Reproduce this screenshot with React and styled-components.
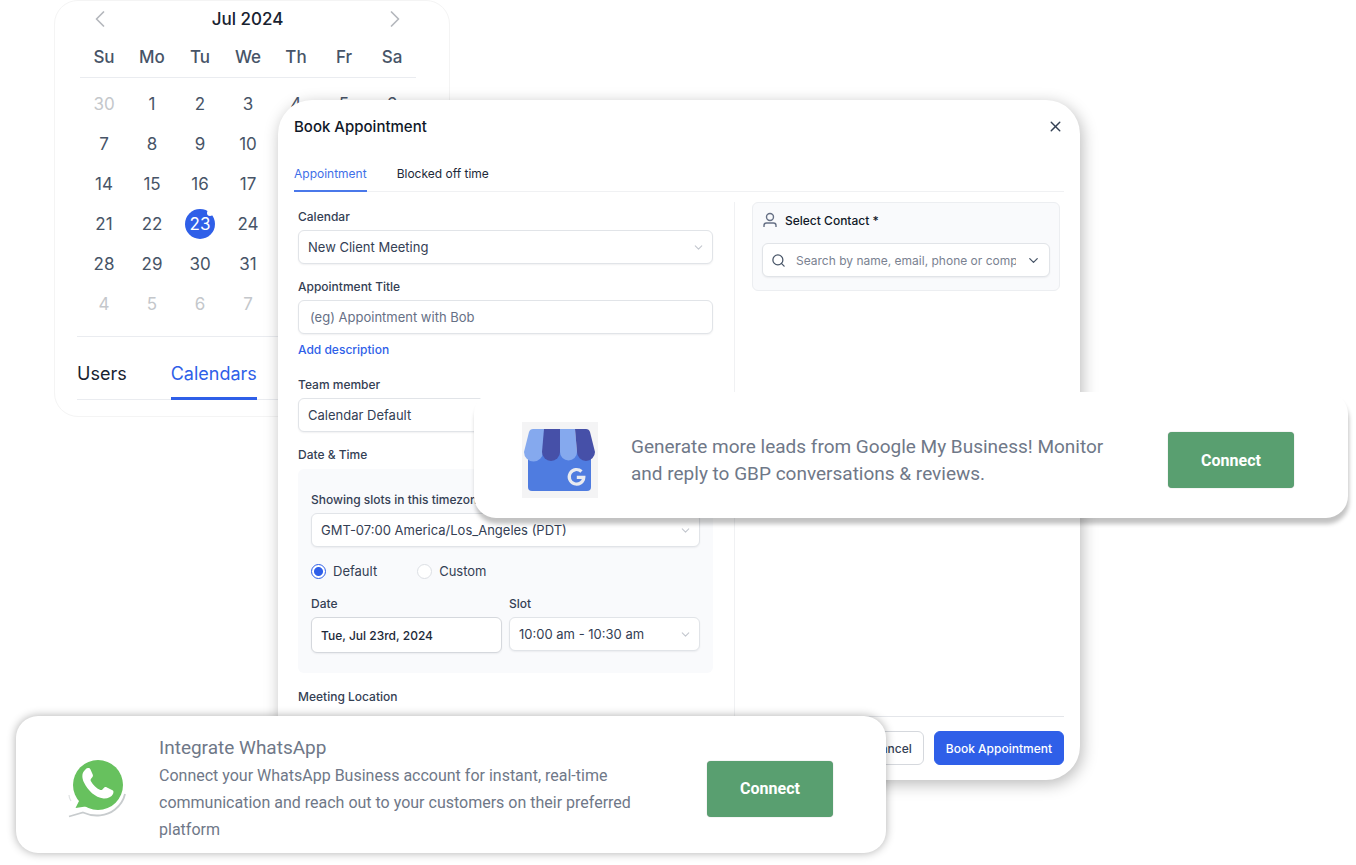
import React, { useState } from 'react';
import styled, { createGlobalStyle, css } from 'styled-components';
import { ChevronDown, ChevronLeft, ChevronRight, Search, X } from 'lucide-react';

const GlobalStyle = createGlobalStyle`
  * {
    box-sizing: border-box;
  }
  body {
    margin: 0;
    background: #fff;
    font-family: Inter, 'Liberation Sans', sans-serif;
    color: #344054;
  }
  button, input, select {
    font-family: inherit;
    color: inherit;
    margin: 0;
  }
`;

const Stage = styled.main`
  position: relative;
  min-width: 1100px;
  min-height: 100vh;
  overflow: hidden;
`;

/* ---------- calendar ---------- */

const CalendarCard = styled.section`
  position: absolute;
  top: 0;
  left: 54px;
  width: 396px;
  padding: 8px 0 16px 22px;
  border: 1px solid #f4f4f4;
  border-radius: 24px;
`;
const MonthBar = styled.header`
  display: flex;
  justify-content: space-between;
  align-items: center;
  width: 339px;
  height: 20px;
  padding: 0 7px 0 9px;
`;
const MonthTitle = styled.h2`
  margin: 0;
  font-size: 17px;
  font-weight: 500;
  color: #182230;
`;
const IconButton = styled.button`
  display: flex;
  padding: 0;
  border: 0;
  background: none;
  color: ${({ $color }) => $color};
  cursor: pointer;
`;
const MonthTable = styled.table`
  width: 336px;
  margin-left: 3px;
  table-layout: fixed;
  border-collapse: collapse;
  text-align: center;
  font-size: 17px;

  th {
    height: 48px;
    padding: 8px 0 0;
    font-weight: 500;
    color: #475467;
    border-bottom: 1px solid #eaecf0;
  }
  td {
    height: 40px;
    padding: 0;
  }
  tbody tr:first-child td {
    height: 47px;
    padding-top: 6px;
  }
`;
const Day = styled.span`
  display: inline-block;
  position: relative;
  width: 30px;
  line-height: 30px;
  border-radius: 50%;
  color: ${({ $muted }) => ($muted ? '#c4c7cb' : '#475467')};

  ${({ $selected }) =>
    $selected &&
    css`
      background: #2f5fe8;
      color: #fff;

      &::after {
        content: '';
        position: absolute;
        top: 1px;
        right: 2px;
        width: 6px;
        height: 6px;
        border-radius: 50%;
        background: #fff;
      }
    `}
`;
const SideTabs = styled.nav`
  display: flex;
  gap: 44px;
  margin-top: 12px;
  padding-top: 24px;
  border-top: 1px solid #eaecf0;
  box-shadow: inset 0 -1px #eaecf0;
`;
const SideTab = styled.a`
  padding-bottom: 10px;
  border-bottom: 3px solid ${({ $active }) => ($active ? '#2f5fe8' : 'transparent')};
  font-size: 18px;
  line-height: 26px;
  color: ${({ $active }) => ($active ? '#2f5fe8' : '#182230')};
  text-decoration: none;
`;

/* ---------- booking dialog ---------- */

const Dialog = styled.section`
  position: absolute;
  top: 100px;
  left: 278px;
  right: 276px;
  padding: 16px 16px 15px;
  border-radius: 34px;
  background: #fff;
  box-shadow: 2px 4px 16px rgba(0, 0, 0, 0.28);
`;
const DialogHeader = styled.header`
  display: flex;
  justify-content: space-between;
  align-items: center;
  height: 20px;
`;
const DialogTitle = styled.h1`
  margin: 0;
  font-size: 15px;
  font-weight: 500;
  color: #101828;
`;
const Tabs = styled.nav`
  display: flex;
  gap: 30px;
  margin-top: 29px;
  box-shadow: inset 0 -1px #f0f1f3;
`;
const Tab = styled.a`
  padding-bottom: 7px;
  border-bottom: 2px solid ${({ $active }) => ($active ? '#4a78ea' : 'transparent')};
  font-size: 12px;
  line-height: 18px;
  color: ${({ $active }) => ($active ? '#3f6fe8' : '#1d2939')};
  text-decoration: none;
`;
const Body = styled.div`
  display: grid;
  grid-template-columns: minmax(0, 1fr) 326px;
  margin-top: 10px;
  padding: 0 4px;
`;
const Form = styled.form`
  height: 514px;
  padding: 7px 21px 0 0;
`;
const Field = styled.div`
  display: flex;
  flex-direction: column;
  gap: 5px;
  min-width: 0;
  margin-bottom: ${({ $last }) => ($last ? '0' : '15px')};
`;
const Label = styled.label`
  font-size: 12px;
  font-weight: 500;
  line-height: 16px;
  white-space: nowrap;
`;
const control = css`
  width: 100%;
  height: 34px;
  border: 1px solid #e1e4e8;
  border-radius: 6px;
  background: #fff;
  font-size: 13px;
  box-shadow: 0 1px 2px rgba(16, 24, 40, 0.06);
`;
const SelectBox = styled.div`
  position: relative;

  select {
    ${control}
    padding: 0 32px 1px 9px;
    appearance: none;
  }
  svg {
    position: absolute;
    top: 11px;
    right: 8px;
    color: #c3c7ce;
    pointer-events: none;
  }
`;
const TextInput = styled.input`
  ${control}
  padding: 0 11px;

  &::placeholder {
    color: #667085;
  }
`;
const DateInput = styled.input`
  ${control}
  height: 36px;
  padding: 0 9px;
  border-color: #d5d8dd;
  font-size: 12px;
  font-weight: 500;
  color: #1d2939;
`;
const TextLink = styled.a`
  display: block;
  margin: -7px 0 19px;
  font-size: 12px;
  font-weight: 500;
  line-height: 16px;
  color: #2f5fe8;
  text-decoration: none;
`;
const TimeBox = styled.div`
  margin-top: 1px;
  padding: 23px 13px 20px;
  border-radius: 6px;
  background: #f9fafc;
`;
const RadioRow = styled.div`
  display: flex;
  gap: 40px;
  margin: 16px 0 17px;
`;
const Radio = styled.label`
  display: flex;
  align-items: center;
  gap: 7px;
  height: 16px;
  font-size: 13px;

  input {
    width: 15px;
    height: 15px;
    border: 1px solid #dcdfe4;
    border-radius: 50%;
    background: #fff;
    appearance: none;
  }
  input:checked {
    border-color: #2f5fe8;
    background: radial-gradient(#2f5fe8 0 4px, #fff 5px);
  }
`;
const Pair = styled.div`
  display: grid;
  grid-template-columns: 1fr 1fr;
  gap: 7px;
`;
const LocationLabel = styled.h3`
  margin: 0;
  padding-top: 1px;
  font-size: 12px;
  font-weight: 500;
  line-height: 16px;
`;
const Aside = styled.aside`
  padding-left: 17px;
  border-left: 1px solid #f0f1f3;
`;
const ContactCard = styled.div`
  padding: 8px 9px 13px;
  border: 1px solid #eceef1;
  border-radius: 6px;
  background: #f9fafc;
`;
const ContactLabel = styled.label`
  display: flex;
  align-items: center;
  gap: 7px;
  height: 18px;
  margin-bottom: 14px;
  font-size: 12px;
  font-weight: 500;
  color: #101828;
`;
const SearchBox = styled.div`
  ${control}
  display: flex;
  align-items: center;
  gap: 10px;
  padding: 0 8px;
  color: #475467;

  input {
    flex: 1;
    min-width: 0;
    padding: 0;
    border: 0;
    background: none;
    font-size: 12px;
  }
  input::placeholder {
    color: #7a8291;
  }
`;
const Footer = styled.footer`
  display: flex;
  justify-content: flex-end;
  gap: 10px;
  padding-top: 14px;
  border-top: 1px solid #e4e6ea;
`;
const ActionButton = styled.button`
  height: 34px;
  padding: 0 11px;
  border: 1px solid ${({ $primary }) => ($primary ? '#2f5fe8' : '#d5d8dd')};
  border-radius: 6px;
  background: ${({ $primary }) => ($primary ? '#2f5fe8' : '#fff')};
  color: ${({ $primary }) => ($primary ? '#fff' : '#344054')};
  font-size: 12px;
  font-weight: 500;
`;

/* ---------- integration banners ---------- */

const Banner = styled.section`
  position: absolute;
  display: flex;
  align-items: center;
  border-radius: 22px;
  background: #fff;
  font-family: Roboto, sans-serif;
  color: #6f7888;
`;
const GoogleBanner = styled(Banner)`
  top: 392px;
  left: 474px;
  right: 8px;
  gap: 33px;
  min-height: 126px;
  padding: 10px 54px 0 48px;
  box-shadow: 1px 6px 4px rgba(0, 0, 0, 0.24);
`;
const WhatsAppBanner = styled(Banner)`
  top: 716px;
  left: 16px;
  right: 470px;
  gap: 32px;
  padding: 18px 53px 10px 51px;
  box-shadow: 0 0 10px rgba(0, 0, 0, 0.32);
`;
const BannerText = styled.div`
  flex: 1;
`;
const BannerTitle = styled.h2`
  margin: 0;
  font-size: 19px;
  font-weight: 400;
  line-height: 28px;
`;
const BannerCopy = styled.p`
  max-width: 490px;
  margin: 0;
  font-size: ${({ $large }) => ($large ? '19px' : '16px')};
  line-height: 27px;
`;
const ConnectButton = styled.button`
  width: 126px;
  height: 56px;
  border: 0;
  border-radius: 4px;
  background: #599f70;
  color: #fff;
  font-size: 16px;
  font-weight: 700;
  box-shadow: 0 0 1px rgba(0, 0, 0, 0.4);
`;

const weekdays = ['Su', 'Mo', 'Tu', 'We', 'Th', 'Fr', 'Sa'];
// padded with the end of June and the start of August
const weeks = [
  [30, 1, 2, 3, 4, 5, 6],
  [7, 8, 9, 10, 11, 12, 13],
  [14, 15, 16, 17, 18, 19, 20],
  [21, 22, 23, 24, 25, 26, 27],
  [28, 29, 30, 31, 1, 2, 3],
  [4, 5, 6, 7, 8, 9, 10],
];

const isMuted = (day, week) => (week === 0 && day > 20) || (week > 3 && day < 20);

function StoreLogo() {
  return (
    <svg width="76" height="76" viewBox="0 0 76 76" role="img" aria-label="Google My Business">
      <rect width="76" height="76" fill="#f4f4f5" />
      <path d="M6 30h63v35a4 4 0 0 1-4 4H10a4 4 0 0 1-4-4z" fill="#4f7ce0" />
      <path d="M11 7h12l-2 23a8.5 8.5 0 0 1-19 0L7 10q1-3 4-3z" fill="#85a9ee" />
      <path d="M22 7h16v23a8.5 8.5 0 0 1-18 0z" fill="#4650a8" />
      <path d="M38 7h15l2 23a8.5 8.5 0 0 1-17 0z" fill="#85a9ee" />
      <path d="M53 7h11q3 0 4 3l5 20a8.5 8.5 0 0 1-18 0z" fill="#4650a8" />
      <path
        d="M59.5 49.5a7.3 7.3 0 1 0 2.3 5.8h-7"
        fill="none"
        stroke="#e9ebf0"
        strokeWidth="3.2"
      />
    </svg>
  );
}

function WhatsAppLogo() {
  return (
    <svg width="60" height="62" viewBox="0 0 60 62" role="img" aria-label="WhatsApp">
      <path
        d="M2 58.5L16 54.5C27 59.5 40 58 48 51.5Q56 45 58 36"
        fill="none"
        stroke="#c8ccce"
        strokeWidth="1.8"
      />
      <path d="M2 37q0 3 2 6" fill="none" stroke="#dfe2e3" strokeWidth="1.2" />
      <circle cx="31" cy="27" r="25" fill="#67c15e" />
      <path d="M9 38.5L13 41L8.5 50L22 48z" fill="#67c15e" />
      <path
        d="M17.5 12.5c-3 3-2.5 8-.5 12 4 8 11 15 19.5 16 4 .3 8-1.500 9.500-4.500.8-2 .6-3-.5-3.700l-6-3c-1-.5-2-.2-3 1-1 1.500-1.800 2.200-3.200 1.600-4-1.700-7.500-5-9.500-9-.7-1.400.2-2.100 1.500-3.700.8-1 .8-1.800.4-2.800l-2.200-5c-.6-1.300-1-1.500-2.500-1.500-1.500 0-2.500 1.300-3.500 2.600z"
        fill="#fff"
      />
    </svg>
  );
}

function PersonIcon() {
  return (
    <svg width="16" height="16" viewBox="0 0 16 16" fill="none" stroke="#667085" strokeWidth="1.4">
      <circle cx="8" cy="5" r="3.5" />
      <path d="M2 15v-1.5q0-2.5 2.5-2.5h7q2.5 0 2.5 2.5V15" />
    </svg>
  );
}

function Calendar() {
  return (
    <CalendarCard>
      <MonthBar>
        <IconButton $color="#b5b8bd" aria-label="Previous month">
          <ChevronLeft size={28} strokeWidth={1.5} />
        </IconButton>
        <MonthTitle>Jul 2024</MonthTitle>
        <IconButton $color="#b5b8bd" aria-label="Next month">
          <ChevronRight size={28} strokeWidth={1.5} />
        </IconButton>
      </MonthBar>
      <MonthTable>
        <thead>
          <tr>
            {weekdays.map((name) => (
              <th key={name}>{name}</th>
            ))}
          </tr>
        </thead>
        <tbody>
          {weeks.map((week, w) => (
            <tr key={w}>
              {week.map((day) => (
                <td key={day}>
                  <Day $muted={isMuted(day, w)} $selected={day === 23}>
                    {day}
                  </Day>
                </td>
              ))}
            </tr>
          ))}
        </tbody>
      </MonthTable>
      <SideTabs>
        <SideTab href="#users">Users</SideTab>
        <SideTab href="#calendars" $active>
          Calendars
        </SideTab>
      </SideTabs>
    </CalendarCard>
  );
}

function SelectField({ id, label, value, last }) {
  return (
    <Field $last={last}>
      <Label htmlFor={id}>{label}</Label>
      <SelectBox>
        <select id={id} defaultValue={value}>
          <option>{value}</option>
        </select>
        <ChevronDown size={13} strokeWidth={2} />
      </SelectBox>
    </Field>
  );
}

function BookingDialog() {
  const [mode, setMode] = useState('default');

  return (
    <Dialog role="dialog" aria-labelledby="dialog-title">
      <DialogHeader>
        <DialogTitle id="dialog-title">Book Appointment</DialogTitle>
        <IconButton $color="#344054" aria-label="Close">
          <X size={17} strokeWidth={2} />
        </IconButton>
      </DialogHeader>
      <Tabs>
        <Tab href="#appointment" $active>
          Appointment
        </Tab>
        <Tab href="#blocked">Blocked off time</Tab>
      </Tabs>
      <Body>
        <Form>
          <SelectField id="calendar" label="Calendar" value="New Client Meeting" />
          <Field>
            <Label htmlFor="title">Appointment Title</Label>
            <TextInput id="title" placeholder="(eg) Appointment with Bob" />
          </Field>
          <TextLink href="#description">Add description</TextLink>
          <SelectField id="member" label="Team member" value="Calendar Default" />
          <Field>
            <Label as="span">Date &amp; Time</Label>
            <TimeBox>
              <SelectField
                id="timezone"
                label="Showing slots in this timezone:"
                value="GMT-07:00 America/Los_Angeles (PDT)"
                last
              />
              <RadioRow>
                <Radio>
                  <input
                    type="radio"
                    name="mode"
                    checked={mode === 'default'}
                    onChange={() => setMode('default')}
                  />
                  Default
                </Radio>
                <Radio>
                  <input
                    type="radio"
                    name="mode"
                    checked={mode === 'custom'}
                    onChange={() => setMode('custom')}
                  />
                  Custom
                </Radio>
              </RadioRow>
              <Pair>
                <Field $last>
                  <Label htmlFor="date">Date</Label>
                  <DateInput id="date" defaultValue="Tue, Jul 23rd, 2024" />
                </Field>
                <SelectField id="slot" label="Slot" value="10:00 am - 10:30 am" last />
              </Pair>
            </TimeBox>
          </Field>
          <LocationLabel>Meeting Location</LocationLabel>
        </Form>
        <Aside>
          <ContactCard>
            <ContactLabel htmlFor="contact">
              <PersonIcon />
              <span>Select Contact *</span>
            </ContactLabel>
            <SearchBox>
              <Search size={15} strokeWidth={2} />
              <input id="contact" placeholder="Search by name, email, phone or company" />
              <ChevronDown size={15} strokeWidth={2} />
            </SearchBox>
          </ContactCard>
        </Aside>
      </Body>
      <Footer>
        <ActionButton>Cancel</ActionButton>
        <ActionButton $primary>Book Appointment</ActionButton>
      </Footer>
    </Dialog>
  );
}

export default function App() {
  return (
    <>
      <GlobalStyle />
      <Stage>
        <Calendar />
        <BookingDialog />
        <GoogleBanner>
          <StoreLogo />
          <BannerText>
            <BannerCopy $large>
              Generate more leads from Google My Business! Monitor and reply to GBP conversations
              &amp; reviews.
            </BannerCopy>
          </BannerText>
          <ConnectButton>Connect</ConnectButton>
        </GoogleBanner>
        <WhatsAppBanner>
          <WhatsAppLogo />
          <BannerText>
            <BannerTitle>Integrate WhatsApp</BannerTitle>
            <BannerCopy>
              Connect your WhatsApp Business account for instant, real-time communication and reach
              out to your customers on their preferred platform
            </BannerCopy>
          </BannerText>
          <ConnectButton>Connect</ConnectButton>
        </WhatsAppBanner>
      </Stage>
    </>
  );
}
